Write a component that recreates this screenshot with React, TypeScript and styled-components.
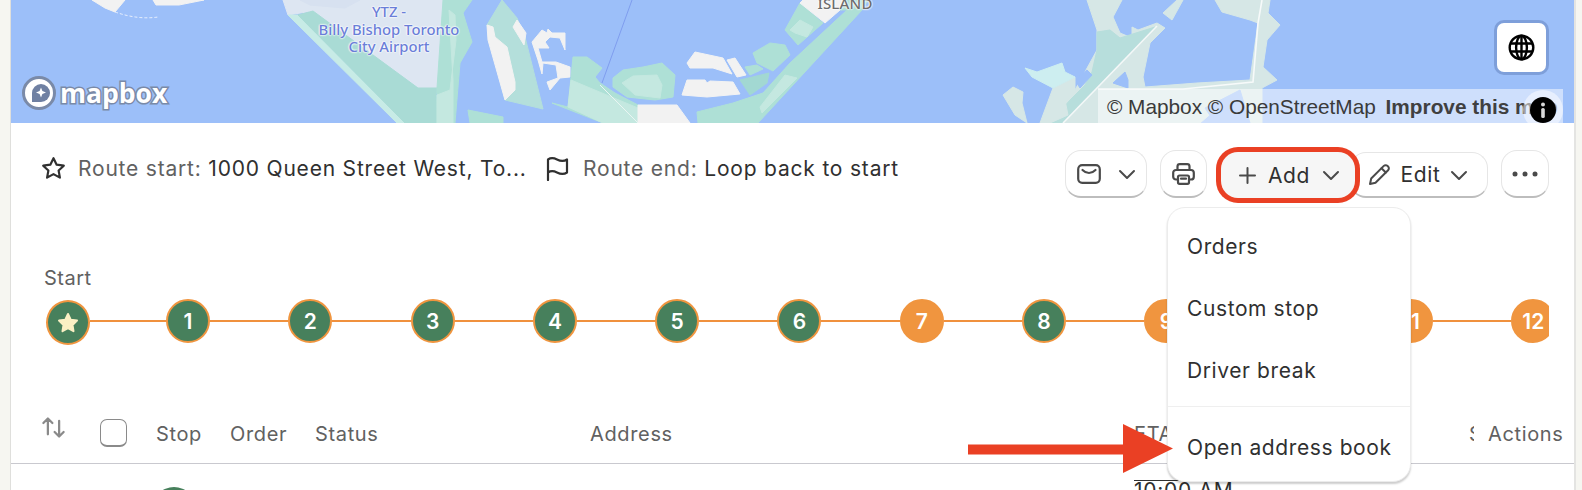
import React from "react";
import styled, { createGlobalStyle } from "styled-components";

const Global = createGlobalStyle`
  html, body { margin: 0; padding: 0; background: #f6f6f1; }
  body { font-family: Inter, "Liberation Sans", sans-serif; color: #303030; overflow: hidden; }
  #root { height: 490px; }
`;

const Panel = styled.div`
  position: relative;
  box-sizing: content-box;
  width: 1563px;
  height: 490px;
  margin-left: 10px;
  border-left: 1px solid #dfdfdc;
  border-right: 2px solid #e4e4e2;
  background: #fff;
  overflow: hidden;
`;

const MapArea = styled.div`
  position: relative;
  height: 123px;
  background: #9cbff9;
  overflow: hidden;
`;
const MapSvg = styled.svg`
  position: absolute;
  inset: 0;
  display: block;
  filter: blur(0.5px);
`;
const MapLabel = styled.div<{ $x: number; $y: number }>`
  position: absolute;
  left: ${(p) => p.$x - 11}px;
  top: ${(p) => p.$y}px;
  transform: translateX(-50%);
  font-family: "Noto Sans", sans-serif;
  font-size: 14.8px;
  line-height: 17.5px;
  font-weight: 500;
  text-align: center;
  white-space: nowrap;
  color: #6a7ed8;
  text-shadow: 0 0 2px #fff, 0 0 2px #fff, 0 0 2px #fff;
`;
const IslandLabel = styled(MapLabel)`
  font-size: 15px;
  line-height: 16px;
  color: #6d6d6d;
  letter-spacing: 0.2px;
`;
const LogoWrap = styled.div`
  position: absolute;
  left: 10px;
  top: 75px;
  display: flex;
  align-items: center;
  gap: 3px;
  height: 36px;
`;
const LogoWord = styled.span`
  font-family: "Open Sans", sans-serif;
  font-weight: 700;
  font-size: 26.5px;
  line-height: 34px;
  color: #fff;
  -webkit-text-stroke: 3px #7a8aa8;
  paint-order: stroke fill;
`;
const GlobeButton = styled.div`
  position: absolute;
  left: 1486px;
  top: 23px;
  width: 49px;
  height: 49px;
  border-radius: 7px;
  background: #fff;
  box-shadow: 0 0 0 3px rgba(90, 120, 180, 0.45);
  display: flex;
  align-items: center;
  justify-content: center;
`;
const Attribution = styled.div`
  position: absolute;
  left: 1087px;
  top: 89px;
  width: 465px;
  height: 34px;
  box-sizing: border-box;
  padding-left: 9px;
  background: rgba(255, 255, 255, 0.5);
  font-family: "Liberation Sans", sans-serif;
  font-size: 20.8px;
  line-height: 36px;
  color: #3a3a3a;
  white-space: nowrap;
  overflow: hidden;
`;
const Improve = styled.b`
  margin-left: 4px;
  color: #404040;
`;
const InfoHalo = styled.div`
  position: absolute;
  left: 1512px;
  top: 90px;
  width: 40px;
  height: 40px;
  border-radius: 50%;
  background: rgba(255, 255, 255, 0.5);
  display: flex;
  align-items: center;
  justify-content: center;
`;

const RouteBar = styled.div`
  display: flex;
  justify-content: space-between;
  align-items: flex-start;
  padding: 27px 25px 0 30px;
  height: 48px;
`;
const RouteInfo = styled.div`
  display: flex;
  align-items: center;
  height: 36px;
  font-size: 21px;
  letter-spacing: 0.8px;
`;
const RouteItem = styled.div<{ $w: number; $gap: number }>`
  display: flex;
  align-items: center;
  gap: ${(p) => p.$gap}px;
  width: ${(p) => p.$w}px;
  white-space: nowrap;
`;
const Muted = styled.span`
  color: #616161;
`;
const Actions = styled.div`
  display: flex;
  align-items: flex-start;
`;
const Btn = styled.div<{ $w: number; $ml?: number }>`
  box-sizing: border-box;
  width: ${(p) => p.$w}px;
  height: 48px;
  margin-left: ${(p) => p.$ml ?? 0}px;
  display: flex;
  align-items: center;
  justify-content: center;
  gap: 11px;
  border-radius: 16px;
  background: #fff;
  border: 1px solid #e6e6e6;
  border-bottom: 2px solid #bdbdbd;
  font-size: 21px;
  letter-spacing: 0.6px;
  color: #303030;
`;
const MailBtn = styled(Btn)`
  gap: 17px;
`;
const AddBtn = styled(Btn)`
  position: relative;
  z-index: 2;
  height: 46px;
  margin-top: 2px;
  gap: 12px;
  padding-left: 3px;
  background: #f6f6f6;
  border: none;
  border-radius: 17px;
  box-shadow: 0 0 0 5px #ea4024;
`;
const EditBtn = styled(Btn)`
  height: 46px;
  margin-top: 2px;
  padding-left: 1px;
  padding-right: 3px;
  gap: 10px;
`;

const Stepper = styled.div`
  padding: 69px 25px 0 33px;
`;
const StartLabel = styled.div`
  font-size: 20px;
  line-height: 23px;
  letter-spacing: 0.5px;
  color: #616161;
`;
const StepRow = styled.div`
  display: flex;
  align-items: center;
  margin: 7px 0 0 2px;
  height: 48px;
  overflow: hidden;
`;
const Stop = styled.div<{ $c: "green" | "orange" }>`
  flex: 0 0 44px;
  width: 44px;
  height: 44px;
  box-sizing: border-box;
  border-radius: 50%;
  background: ${(p) => (p.$c === "green" ? "#47805c" : "#f0953f")};
  border: 2px solid #f0953f;
  color: #fff;
  font-weight: 600;
  font-size: 21px;
  display: flex;
  align-items: center;
  justify-content: center;
`;
const StartStop = styled(Stop)`
  height: 45px;
  margin-top: 3px;
`;
const Connector = styled.div<{ $w: number }>`
  flex: 0 0 ${(p) => p.$w}px;
  height: 2.5px;
  background: #f0913e;
`;

const HeaderRow = styled.div`
  display: grid;
  grid-template-columns: 59px 56px 74px 85px 275px 544px 335px 19px 1fr;
  align-items: center;
  box-sizing: border-box;
  height: 49px;
  margin-top: 70px;
  padding: 0 0 10px 30px;
  border-bottom: 1px solid #c9c9cf;
  font-size: 20px;
  letter-spacing: 0.65px;
  color: #616161;
`;
const SortCell = styled.div`
  display: flex;
  margin: -13px 0 0 -1px;
  color: #8a8a8a;
`;
const Check = styled.div`
  width: 27px;
  height: 28px;
  box-sizing: border-box;
  margin-top: -3px;
  border-radius: 7px;
  border: 1px solid #8a8a8a;
  border-bottom-width: 2px;
  background: #fff;
`;
const ClippedCell = styled.div`
  width: 5px;
  overflow: hidden;
`;
const BodyRow = styled.div`
  display: grid;
  grid-template-columns: 111px 982px 1fr;
  padding-left: 30px;
`;
const RowStop = styled.div`
  width: 44px;
  height: 44px;
  margin-top: 23px;
  border-radius: 50%;
  background: #47805c;
`;
const RowTime = styled.div`
  margin-top: 16px;
  width: 101px;
  border-top: 1px solid #303030;
  font-size: 21px;
  line-height: 20px;
  letter-spacing: 0.7px;
  white-space: nowrap;
`;

const Menu = styled.div`
  position: absolute;
  z-index: 3;
  left: 1156px;
  top: 207px;
  width: 244px;
  height: 275px;
  box-sizing: border-box;
  padding-top: 7.5px;
  border-radius: 18px;
  background: #fff;
  border: 1px solid #ececec;
  box-shadow: 0 2px 2px rgba(0, 0, 0, 0.2);
`;
const MenuItem = styled.div`
  height: 62px;
  display: flex;
  align-items: center;
  padding-left: 19px;
  font-size: 21px;
  letter-spacing: 0.6px;
  color: #303030;
  white-space: nowrap;
`;
const MenuDivider = styled.div`
  height: 1px;
  margin: 4.5px 0 9px;
  background: #efefef;
`;
const Arrow = styled.svg`
  position: absolute;
  z-index: 4;
  left: 957px;
  top: 424px;
`;

const land = "#aee0d6";
const light = "#c4e8e0";
const pale = "#d6e7e6";
const white = "#f2f2f2";

const shapes: [string, string][] = [
  ["92,0 105,8 115,12 125,0", white],
  ["153,0 156,5 179,5 204,0", white],
  ["283,0 288,15 313,11 418,88 437,88 444,30 447,0", "#dde6f2"],
  ["300,0 360,0 345,8 310,5", "#d7e1f0"],
  ["288,15 298,15 405,123 397,123", "#c7ebe6"],
  ["298,15 313,11 418,88 437,88 436,95 438,123 405,123", "#a9dbd5"],
  ["443,0 472,0 463,13 472,42 460,63 455,123 437,123 437,88", land],
  ["449,10 455,15 456,40 450,90 437,95 437,123 453,123 453,80", light],
  ["502,0 487,25 505,100 543,109 525,37 517,18", "#b4dfdb"],
  ["487,25 493,27 495,37 507,47 515,82 515,90 505,100 488,40", white],
  ["517,20 526,33 524,45 513,27", white],
  ["468,110 503,117 503,123 470,123", land],
  ["532,42 542,30 547,33 548,29 552,33 565,33 565,50 560,38 550,37 545,42 549,48 538,48 542,62 556,62 570,67 570,77 560,78 550,90 547,82 558,78 556,65 543,63 542,74 538,60", white],
  ["573,57 587,57 602,68 595,77 600,83 615,93 638,105 638,123 603,123 552,103 568,107", land],
  ["571,80 590,88 638,108 638,123 603,123 568,107", light],
  ["613,78 623,70 643,67 662,63 675,75 673,97 655,100 627,97 613,87", land],
  ["622,83 633,76 657,75 662,85 660,98 635,95", light],
  ["638,105 677,105 690,123 638,123", white],
  ["687,63 695,52 723,58 732,74 713,68 690,68", white],
  ["727,60 735,58 746,75 737,77", white],
  ["682,95 687,80 705,80 707,83 710,81 733,82 740,94 707,97", white],
  ["745,67 757,65 763,69 750,75", land],
  ["740,80 769,73 767,83 750,95", "#a2d8d2"],
  ["753,53 770,43 785,45 790,55 773,71 757,63", land],
  ["697,112 733,103 763,93 790,63 847,10 862,10 758,123 698,123", land],
  ["760,107 785,75 797,78 762,113", light],
  ["785,30 800,3 823,23 798,45", land],
  ["790,30 800,20 813,27 807,37 795,33", light],
  ["800,3 803,0 845,0 840,10 825,23", white],
  ["840,10 862,10 868,0 845,0", land],
  ["1087,0 1122,0 1113,17 1120,33 1132,38 1132,27 1138,30 1157,23 1165,28 1150,43 1143,77 1145,87 1197,83 1250,80 1258,23 1250,20 1222,12 1215,0 1270,0 1268,13 1280,25 1267,40 1263,67 1277,80 1262,88 1262,123 1240,123 1215,110 1200,123 1063,123 1063,100 1075,90 1097,50 1097,30", pale],
  ["1097,32 1110,30 1120,38 1155,27 1063,123 1050,123 1070,100 1085,85 1092,72 1097,50", "#b7dedc"],
  ["1087,70 1092,75 1080,88 1075,80", "#9cbff9"],
  ["1113,83 1125,72 1128,80 1128,88", "#9cbff9"],
  ["1163,13 1177,0 1183,0 1172,20", pale],
  ["1215,123 1205,108 1240,90 1250,123", "#9cbff9"],
  ["1053,88 1075,77 1075,90 1065,100 1068,115 1050,123 1040,123", pale],
  ["1025,68 1037,72 1062,63 1065,72 1075,77 1053,88 1032,77", "#cdeef0"],
  ["1003,95 1013,87 1023,92 1022,103 1027,123 1015,115", pale],
];

const stops = ["1", "2", "3", "4", "5", "6", "7", "8", "9", "10", "11", "12"];
const orange = new Set(["7", "9", "10", "11", "12"]);

const Chevron = () => (
  <svg width="18" height="18" viewBox="0 0 18 18" fill="none" stroke="#4a4a4a" strokeWidth="2" strokeLinecap="round" strokeLinejoin="round">
    <path d="M2 6l7 7 7-7" />
  </svg>
);

export default function App() {
  return (
    <Panel>
      <Global />
      <MapArea>
        <MapSvg width="1563" height="123" viewBox="11 0 1563 123">
          {shapes.map(([pts, fill], i) => (
            <polygon key={i} points={pts} fill={fill} stroke={fill} strokeWidth="1" strokeLinejoin="round" />
          ))}
          <path d="M115 12Q138 20 158 17" stroke="#e8effc" strokeWidth="1" fill="none" strokeDasharray="3 2" />
          <path d="M632 0L602 83" stroke="#7f9dee" strokeWidth="1" fill="none" />
          <path d="M600 85L638 123" stroke="#e9f5f2" strokeWidth="1" fill="none" />
          <path d="M1157 26L1063 123" stroke="#f4f8f8" strokeWidth="1.6" fill="none" />
          <path d="M1098 89H1183L1253 82L1258 23L1262 0" stroke="#f7fafa" strokeWidth="1.6" fill="none" />
        </MapSvg>
        <MapLabel $x={389} $y={3}>
          YTZ -<br />
          Billy Bishop Toronto
          <br />
          City Airport
        </MapLabel>
        <IslandLabel $x={845} $y={-5}>ISLAND</IslandLabel>
        <LogoWrap>
          <svg width="36" height="36" viewBox="0 0 36 36">
            <circle cx="18" cy="18" r="15.5" fill="#fff" stroke="#7a8aa8" strokeWidth="3" />
            <path d="M11 18a9 9 0 1 1 9 9h-9z" fill="#6f80a2" />
            <path d="M20 12.5l1.4 3.6 3.6 1.4-3.6 1.4-1.4 3.6-1.4-3.6-3.6-1.4 3.6-1.4z" fill="#fff" />
          </svg>
          <LogoWord>mapbox</LogoWord>
        </LogoWrap>
        <GlobeButton>
          <svg width="27" height="27" viewBox="0 0 27 27" fill="none" stroke="#000" strokeWidth="2.4">
            <circle cx="13.5" cy="13.5" r="11.8" />
            <ellipse cx="13.5" cy="13.5" rx="5.4" ry="11.8" />
            <path d="M2 9.5h23M2 17.5h23M13.5 2v23" />
          </svg>
        </GlobeButton>
        <Attribution>
          © Mapbox © OpenStreetMap <Improve>Improve this map</Improve>
        </Attribution>
        <InfoHalo>
          <svg width="26" height="26" viewBox="0 0 26 26">
            <circle cx="13" cy="13" r="13" fill="#000" />
            <circle cx="13" cy="7.5" r="2" fill="#d8d8d8" />
            <rect x="11.2" y="11" width="3.6" height="10" rx="1.6" fill="#d8d8d8" />
          </svg>
        </InfoHalo>
      </MapArea>

      <RouteBar>
        <RouteInfo>
          <RouteItem $w={505} $gap={12}>
            <svg width="25" height="25" viewBox="0 0 23 23" fill="none" stroke="#303030" strokeWidth="2" strokeLinejoin="round">
              <path d="M11.5 2l2.9 6 6.600.9-4.800 4.500 1.200 6.500-5.900-3.200-5.900 3.200 1.200-6.500L2 8.900 8.600 8z" />
            </svg>
            <span>
              <Muted>Route start:</Muted> 1000 Queen Street West, To...
            </span>
          </RouteItem>
          <RouteItem $w={360} $gap={14}>
            <svg width="23" height="25" viewBox="0 0 23 25" fill="none" stroke="#303030" strokeWidth="2.2" strokeLinecap="round" strokeLinejoin="round">
              <path d="M2 24V3.500C5 1.500 8 2 11 3.500s7 2 10 0v13c-3 2-7 1.500-10 0s-6-2-9 0" />
            </svg>
            <span>
              <Muted>Route end:</Muted> Loop back to start
            </span>
          </RouteItem>
        </RouteInfo>
        <Actions>
          <MailBtn $w={82}>
            <svg width="24" height="20" viewBox="0 0 24 20" fill="none" stroke="#4a4a4a" strokeWidth="2.2" strokeLinecap="round" strokeLinejoin="round">
              <rect x="1.2" y="1.2" width="21.6" height="17.6" rx="4" />
              <path d="M5.500 6c4 4 9 4 13 0" />
            </svg>
            <Chevron />
          </MailBtn>
          <Btn $w={47} $ml={13}>
            <svg width="23" height="22" viewBox="0 0 23 22" fill="none" stroke="#4a4a4a" strokeWidth="2.2" strokeLinejoin="round" strokeLinecap="round">
              <path d="M5.500 7V3.500a2.300 2.300 0 0 1 2.300-2.300h7.400a2.300 2.300 0 0 1 2.300 2.300V7" />
              <path d="M5.500 16.500H4a2.800 2.800 0 0 1-2.800-2.800V9.800A2.800 2.800 0 0 1 4 7h15a2.800 2.800 0 0 1 2.800 2.800v3.900a2.800 2.800 0 0 1-2.800 2.800h-1.500" />
              <rect x="6" y="12.500" width="11" height="8.300" rx="1.500" />
              <path d="M9 15.700h5" />
            </svg>
          </Btn>
          <AddBtn $w={134} $ml={14}>
            <svg width="17" height="17" viewBox="0 0 17 17" fill="none" stroke="#4a4a4a" strokeWidth="2" strokeLinecap="round">
              <path d="M8.500 1v15M1 8.500h15" />
            </svg>
            <span>Add</span>
            <Chevron />
          </AddBtn>
          <EditBtn $w={138} $ml={-5}>
            <svg width="23" height="23" viewBox="0 0 23 23" fill="none" stroke="#4a4a4a" strokeWidth="2" strokeLinejoin="round" strokeLinecap="round">
              <path d="M2 21l1.200-5.500L15.800 2.900a2.600 2.600 0 0 1 3.700 0l.6.600a2.600 2.600 0 0 1 0 3.700L7.500 19.800z" />
              <path d="M13.500 5.200l4.300 4.300" />
            </svg>
            <span>Edit</span>
            <Chevron />
          </EditBtn>
          <Btn $w={48} $ml={13}>
            <svg width="26" height="6" viewBox="0 0 26 6" fill="#4a4a4a">
              <circle cx="3" cy="3" r="2.500" />
              <circle cx="13" cy="3" r="2.500" />
              <circle cx="23" cy="3" r="2.500" />
            </svg>
          </Btn>
        </Actions>
      </RouteBar>

      <Stepper>
        <StartLabel>Start</StartLabel>
        <StepRow>
          <StartStop $c="green">
            <svg width="22" height="21" viewBox="0 0 22 21" fill="#fbf0c4" stroke="#fbf0c4" strokeWidth="2" strokeLinejoin="round">
              <path d="M11 2l2.700 5.700 6.300.9-4.500 4.400 1 6.200-5.500-3-5.500 3 1-6.200L2 8.600l6.300-.9z" />
            </svg>
          </StartStop>
          {stops.map((s, i) => (
            <React.Fragment key={s}>
              <Connector $w={i === 0 ? 76 : 78.3} />
              <Stop $c={orange.has(s) ? "orange" : "green"}>{s}</Stop>
            </React.Fragment>
          ))}
        </StepRow>
      </Stepper>

      <HeaderRow>
        <SortCell>
          <svg width="27" height="27" viewBox="0 0 24 24" fill="none" stroke="currentColor" strokeWidth="2" strokeLinecap="round" strokeLinejoin="round">
            <path d="M3 8l4-4 4 4M7 4v14M21 16l-4 4-4-4M17 20V6" />
          </svg>
        </SortCell>
        <Check />
        <div>Stop</div>
        <div>Order</div>
        <div>Status</div>
        <div>Address</div>
        <div>ETA</div>
        <ClippedCell>Stops</ClippedCell>
        <div>Actions</div>
      </HeaderRow>
      <BodyRow>
        <div />
        <RowStop />
        <RowTime>10:00 AM</RowTime>
      </BodyRow>

      <Menu>
        <MenuItem>Orders</MenuItem>
        <MenuItem>Custom stop</MenuItem>
        <MenuItem>Driver break</MenuItem>
        <MenuDivider />
        <MenuItem>Open address book</MenuItem>
      </Menu>
      <Arrow width="216" height="50" viewBox="0 0 216 50">
        <path d="M0 20.500H155V0L205 24.500L155 49V30.500H0z" fill="#ea4024" />
      </Arrow>
    </Panel>
  );
}
